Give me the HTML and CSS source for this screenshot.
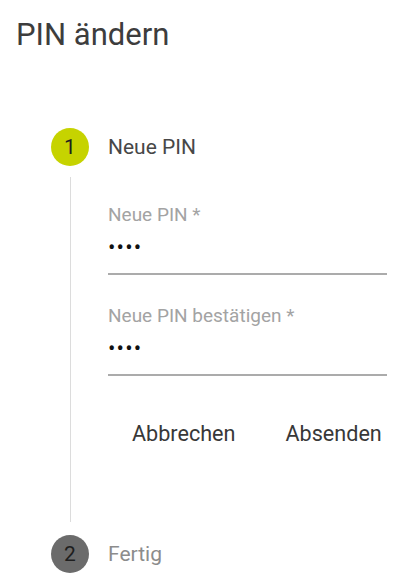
FILE: index.html
```html
<!DOCTYPE html>
<html lang="de">
<head>
  <meta charset="UTF-8" />
  <meta name="viewport" content="width=device-width, initial-scale=1.0" />
  <title>PIN ändern</title>
  <link rel="stylesheet" href="styles.css">
</head>
<body>
  <h1 class="page-title">PIN ändern</h1>

  <div class="stepper">
    <!-- Schritt 1: aktiv -->
    <div class="step">
      <div class="step-header">
        <span class="step-icon active">1</span>
        <span class="step-label">Neue PIN</span>
      </div>
      <div class="step-content">
        <form class="pin-form" onsubmit="return false">
          <label class="field">
            <span class="field-label">Neue PIN *</span>
            <input type="password" value="1234" />
          </label>
          <label class="field">
            <span class="field-label">Neue PIN bestätigen *</span>
            <input type="password" value="1234" />
          </label>
          <div class="actions">
            <button type="button" class="btn">Abbrechen</button>
            <button type="submit" class="btn">Absenden</button>
          </div>
        </form>
      </div>
    </div>

    <!-- Schritt 2 -->
    <div class="step">
      <div class="step-header">
        <span class="step-icon">2</span>
        <span class="step-label muted">Fertig</span>
      </div>
    </div>
  </div>
</body>
</html>
```

FILE: styles.css
```css
body {
  margin: 0;
  background: #fff;
  font-family: Roboto, "Liberation Sans", sans-serif;
  color: #333;
}

.page-title {
  margin: 17px 0 0 16px;
  font-size: 31px;
  font-weight: 400;
  line-height: 36px;
  color: #3d3d3d;
}

.stepper {
  margin-top: 75px;
  padding: 0 22px 0 51px;
}

.step-header {
  display: flex;
  align-items: center;
  gap: 19px;
  height: 38px;
}

.step-icon {
  width: 38px;
  height: 38px;
  border-radius: 50%;
  background: #6b6b6b;
  color: #1e1e1e;
  font-size: 21px;
  line-height: 38px;
  text-align: center;
  flex: 0 0 auto;
}

.step-icon.active {
  background: #c6d300;
}

.step-label {
  font-size: 21px;
  color: #474747;
}

.step-label.muted {
  color: #8c8c8c;
}

.step-content {
  margin: 11px 0 13px 19px;
  padding: 26px 0 62px 37px;
  border-left: 1px solid #dcdcdc;
}

.pin-form {
  display: flex;
  flex-direction: column;
}

.field {
  display: flex;
  flex-direction: column;
}

.field + .field {
  margin-top: 29px;
}

.field-label {
  font-size: 19px;
  line-height: 24px;
  color: #a3a3a3;
}

.field input {
  box-sizing: border-box;
  width: 100%;
  height: 48px;
  padding: 0 0 6px;
  border: none;
  border-bottom: 2px solid #ababab;
  outline: none;
  background: transparent;
  font-family: Roboto, "Liberation Sans", sans-serif;
  font-size: 22px;
  letter-spacing: 1.2px;
  color: #111;
}

.actions {
  display: flex;
  gap: 2px;
  margin-top: 30px;
}

.btn {
  height: 54px;
  padding: 0 24px;
  border: none;
  background: transparent;
  font-family: Roboto, "Liberation Sans", sans-serif;
  font-size: 21.6px;
  color: #383838;
  cursor: pointer;
}
```
